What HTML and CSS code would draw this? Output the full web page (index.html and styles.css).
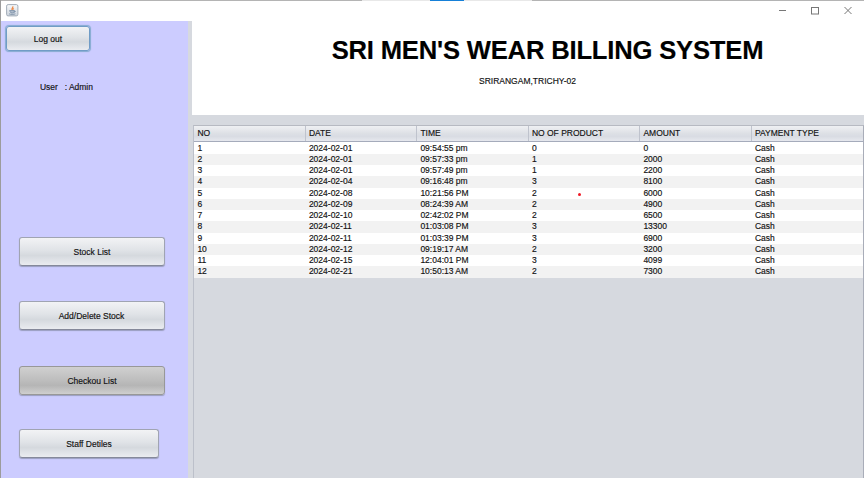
FILE: index.html
```html
<!DOCTYPE html>
<html lang="en">
<head>
<meta charset="utf-8">
<title>Billing System</title>
<link rel="stylesheet" href="styles.css">
</head>
<body>
<div class="window">
  <div class="titlebar">
    <div class="accent"></div>
    <svg class="app-icon" width="13" height="13" viewBox="0 0 13 13">
      <defs><linearGradient id="ig" x1="0" y1="0" x2="0" y2="1"><stop offset="0" stop-color="#fafbfc"/><stop offset="1" stop-color="#cbd3dc"/></linearGradient></defs>
      <rect x=".6" y=".6" width="11.3" height="11.3" rx="1.5" fill="url(#ig)" stroke="#a3adb8"/>
      <path d="M6.8 2.3c.7 1.3-1.8 1.7-.8 3.6M7.7 4c-1 .6-1.1 1-.4 2" fill="none" stroke="#ec8a4b" stroke-width="1.1"/>
      <path d="M3.6 6.5h4.6v1.4c0 1.5-4 1.5-4 0zM8.3 6.8c1.6-.3 1.3 1.3-.2 1.5M3 9.8c1.5.9 5 .8 6.4 0" fill="#8da0b8" fill-opacity=".6" stroke="#71869f" stroke-width=".7"/>
    </svg>
    <svg class="controls" width="72" height="9" viewBox="0 0 72 9" fill="none" stroke="#777" stroke-width="1">
      <path d="M0 4.5H7"/>
      <rect x="32.5" y="1.5" width="7" height="6.5"/>
      <path d="M65.5 1l7 7M72.5 1l-7 7"/>
    </svg>
  </div>
  <div class="main">
    <aside class="sidebar">
      <button class="btn logout">Log out</button>
      <div class="user"><span>User</span><span>: Admin</span></div>
      <nav class="menu">
        <button class="btn">Stock List</button>
        <button class="btn add">Add/Delete Stock</button>
        <button class="btn active">Checkou List</button>
        <button class="btn staff">Staff Detiles</button>
      </nav>
    </aside>
    <section class="content">
      <header class="banner">
        <h1>SRI MEN'S WEAR BILLING SYSTEM</h1>
        <p>SRIRANGAM,TRICHY-02</p>
      </header>
      <div class="table">
        <div class="row head"><span>NO</span><span>DATE</span><span>TIME</span><span>NO OF PRODUCT</span><span>AMOUNT</span><span>PAYMENT TYPE</span></div>
        <div class="rows">
          <div class="row"><span>1</span><span>2024-02-01</span><span>09:54:55 pm</span><span>0</span><span>0</span><span>Cash</span></div>
          <div class="row"><span>2</span><span>2024-02-01</span><span>09:57:33 pm</span><span>1</span><span>2000</span><span>Cash</span></div>
          <div class="row"><span>3</span><span>2024-02-01</span><span>09:57:49 pm</span><span>1</span><span>2200</span><span>Cash</span></div>
          <div class="row"><span>4</span><span>2024-02-04</span><span>09:16:48 pm</span><span>3</span><span>8100</span><span>Cash</span></div>
          <div class="row"><span>5</span><span>2024-02-08</span><span>10:21:56 PM</span><span>2</span><span>6000</span><span>Cash</span></div>
          <div class="row"><span>6</span><span>2024-02-09</span><span>08:24:39 AM</span><span>2</span><span>4900</span><span>Cash</span></div>
          <div class="row"><span>7</span><span>2024-02-10</span><span>02:42:02 PM</span><span>2</span><span>6500</span><span>Cash</span></div>
          <div class="row"><span>8</span><span>2024-02-11</span><span>01:03:08 PM</span><span>3</span><span>13300</span><span>Cash</span></div>
          <div class="row"><span>9</span><span>2024-02-11</span><span>01:03:39 PM</span><span>3</span><span>6900</span><span>Cash</span></div>
          <div class="row"><span>10</span><span>2024-02-12</span><span>09:19:17 AM</span><span>2</span><span>3200</span><span>Cash</span></div>
          <div class="row"><span>11</span><span>2024-02-15</span><span>12:04:01 PM</span><span>3</span><span>4099</span><span>Cash</span></div>
          <div class="row"><span>12</span><span>2024-02-21</span><span>10:50:13 AM</span><span>2</span><span>7300</span><span>Cash</span></div>
        </div>
      </div>
    </section>
  </div>
  <i class="pointer"></i>
</div>
</body>
</html>
```
FILE: styles.css
```css
* { box-sizing: border-box; }
body { margin: 0; font: 8.5px/11px "Liberation Sans", Arial, sans-serif; color: #111; -webkit-text-stroke: .15px currentColor; }
.window { position: relative; width: 864px; height: 478px; overflow: hidden; display: flex; flex-direction: column; background: #fff; border-left: 1px solid #9c9c9c; }
.titlebar { position: relative; height: 21px; flex: none; border-top: 1px solid #b4b4b4; display: flex; justify-content: space-between; padding: 3px 13px 0 5px; }
.accent { position: absolute; left: 361px; top: -1px; width: 170px; height: 1px; background: linear-gradient(90deg, #e8e8e8 68px, #1680d8 68px, #1680d8 102px, #e8e8e8 102px); }
.app-icon { display: block; }
.controls { display: block; margin-top: 2px; overflow: visible; }
.main { flex: 1; display: flex; min-height: 0; background: #d6d9df; }
.sidebar { width: 187px; flex: none; background: #ccccff; padding: 5px 0 0 5px; }
.btn { display: flex; align-items: center; justify-content: center; font: inherit; color: #111; width: 146px; height: 29px; padding: 2px 0 0; border: 1px solid #a0a4b2; border-bottom-color: #85899a; border-radius: 3px; background: linear-gradient(#f2f3f5, #e0e3e7 45%, #d5d9de 65%, #eaecf0); box-shadow: 0 1px 1px #9a9ebf; }
.logout { width: 84px; height: 25px; border: 1px solid #709cc6; box-shadow: 0 0 1px 1px #86abd0; }
.user { display: flex; gap: 7px; margin: 31px 0 0 34px; height: 11px; letter-spacing: -.04px; }
.menu { margin: 144px 0 0 13px; display: flex; flex-direction: column; }
.add { margin-top: 35px; padding-right: 1px; }
.active { margin-top: 36px; border-color: #989898; background: linear-gradient(#d0d0d0, #bdbdbd 50%, #b5b5b5 68%, #cfcfcf); }
.staff { margin-top: 34px; width: 140px; }
.content { flex: 1; margin-left: 4px; display: flex; flex-direction: column; }
.banner { height: 94px; flex: none; background: #fff; text-align: center; overflow: hidden; }
h1 { margin: 14px 0 0 38px; font-size: 25.6px; line-height: 30px; color: #000; letter-spacing: -.18px; white-space: nowrap; }
.banner p { margin: 11px 2px 0 0; line-height: 11px; font-size: 8.5px; }
.table { flex: 1; margin: 10px 1px 0 1px; border-left: 1px solid #bcc0ca; border-right: 1px solid #a9adb9; border-top: 1px solid #b7bac2; }
.row { display: grid; grid-template-columns: repeat(6, 111.5px); height: 11.27px; line-height: 11.27px; background: #fff; }
.row span { padding-left: 3.4px; white-space: nowrap; }
.row:nth-child(even) { background: #f2f2f2; }
.head { height: 16px; line-height: 15px; border-bottom: 1px solid #a5abbb; background: linear-gradient(#eff0f3, #dde0e5 50%, #d9dce3 70%, #e6e8ee); }
.head span + span { border-left: 1px solid #bfc3cd; padding-left: 3.4px; margin-left: -1px; }
.rows { padding-top: .5px; background: #fff; }
.rows .row { overflow: hidden; }
.pointer { position: absolute; left: 577px; top: 193px; width: 3px; height: 3px; border-radius: 50%; background: #f01824; }
```
